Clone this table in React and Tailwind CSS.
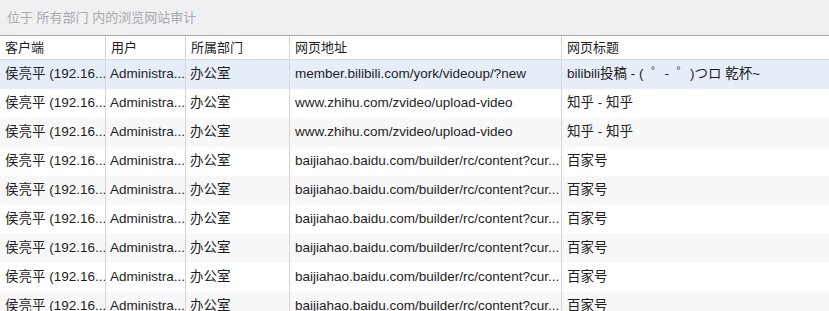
import React from "react";

const cols = [
  { label: "客户端", w: "w-[106px]" },
  { label: "用户", w: "w-[80px]" },
  { label: "所属部门", w: "w-[104px]" },
  { label: "网页地址", w: "w-[272px]" },
  { label: "网页标题", w: "flex-1" },
];

const bd = "baijiahao.baidu.com/builder/rc/content?cur...";

const rows = [
  ["member.bilibili.com/york/videoup/?new", "bilibili投稿 - (  ゜-  ゜)つロ 乾杯~"],
  ["www.zhihu.com/zvideo/upload-video", "知乎 - 知乎"],
  ["www.zhihu.com/zvideo/upload-video", "知乎 - 知乎"],
  [bd, "百家号"],
  [bd, "百家号"],
  [bd, "百家号"],
  [bd, "百家号"],
  [bd, "百家号"],
  [bd, "百家号"],
];

function App() {
  return (
    <div
      className="w-[829px] h-[311px] overflow-hidden bg-white text-[13px] text-[#1e1e1e]"
      style={{ fontFamily: '"Liberation Sans", "Noto Sans CJK SC", sans-serif' }}
    >
      {/* search hint bar */}
      <div className="h-[36px] bg-[#f0f0f3] flex items-center px-[7px] text-[#a9a9ad] border-b border-[#a8a8ac]">
        位于 所有部门 内的浏览网站审计
      </div>

      {/* header */}
      <div className="flex h-[24px] border-b border-[#dcdcdc] bg-white">
        {cols.map((c, i) => (
          <div
            key={i}
            className={`${c.w} flex items-center pl-[5px] ${i < 4 ? "border-r border-[#d6d6d6]" : ""}`}
          >
            {c.label}
          </div>
        ))}
      </div>

      {/* rows */}
      {rows.map((r, idx) => (
        <div
          key={idx}
          className={`flex h-[29px] text-[13.5px] ${idx === 0 ? "bg-[#e6eef9]" : idx % 2 === 1 ? "bg-white" : "bg-[#f8f8f8]"}`}
        >
          <div className="w-[106px] flex items-center pl-[5px] border-r border-[#d6d6d6] whitespace-nowrap overflow-hidden">侯亮平 (192.16...</div>
          <div className="w-[80px] flex items-center pl-[4px] border-r border-[#d6d6d6] whitespace-nowrap overflow-hidden">Administra...</div>
          <div className="w-[104px] flex items-center pl-[4px] border-r border-[#d6d6d6] whitespace-nowrap">办公室</div>
          <div className="w-[272px] flex items-center pl-[5px] border-r border-[#d6d6d6] whitespace-nowrap overflow-hidden">{r[0]}</div>
          <div className="flex-1 flex items-center pl-[5px] whitespace-pre">{r[1]}</div>
        </div>
      ))}
    </div>
  );
}

export default App;
